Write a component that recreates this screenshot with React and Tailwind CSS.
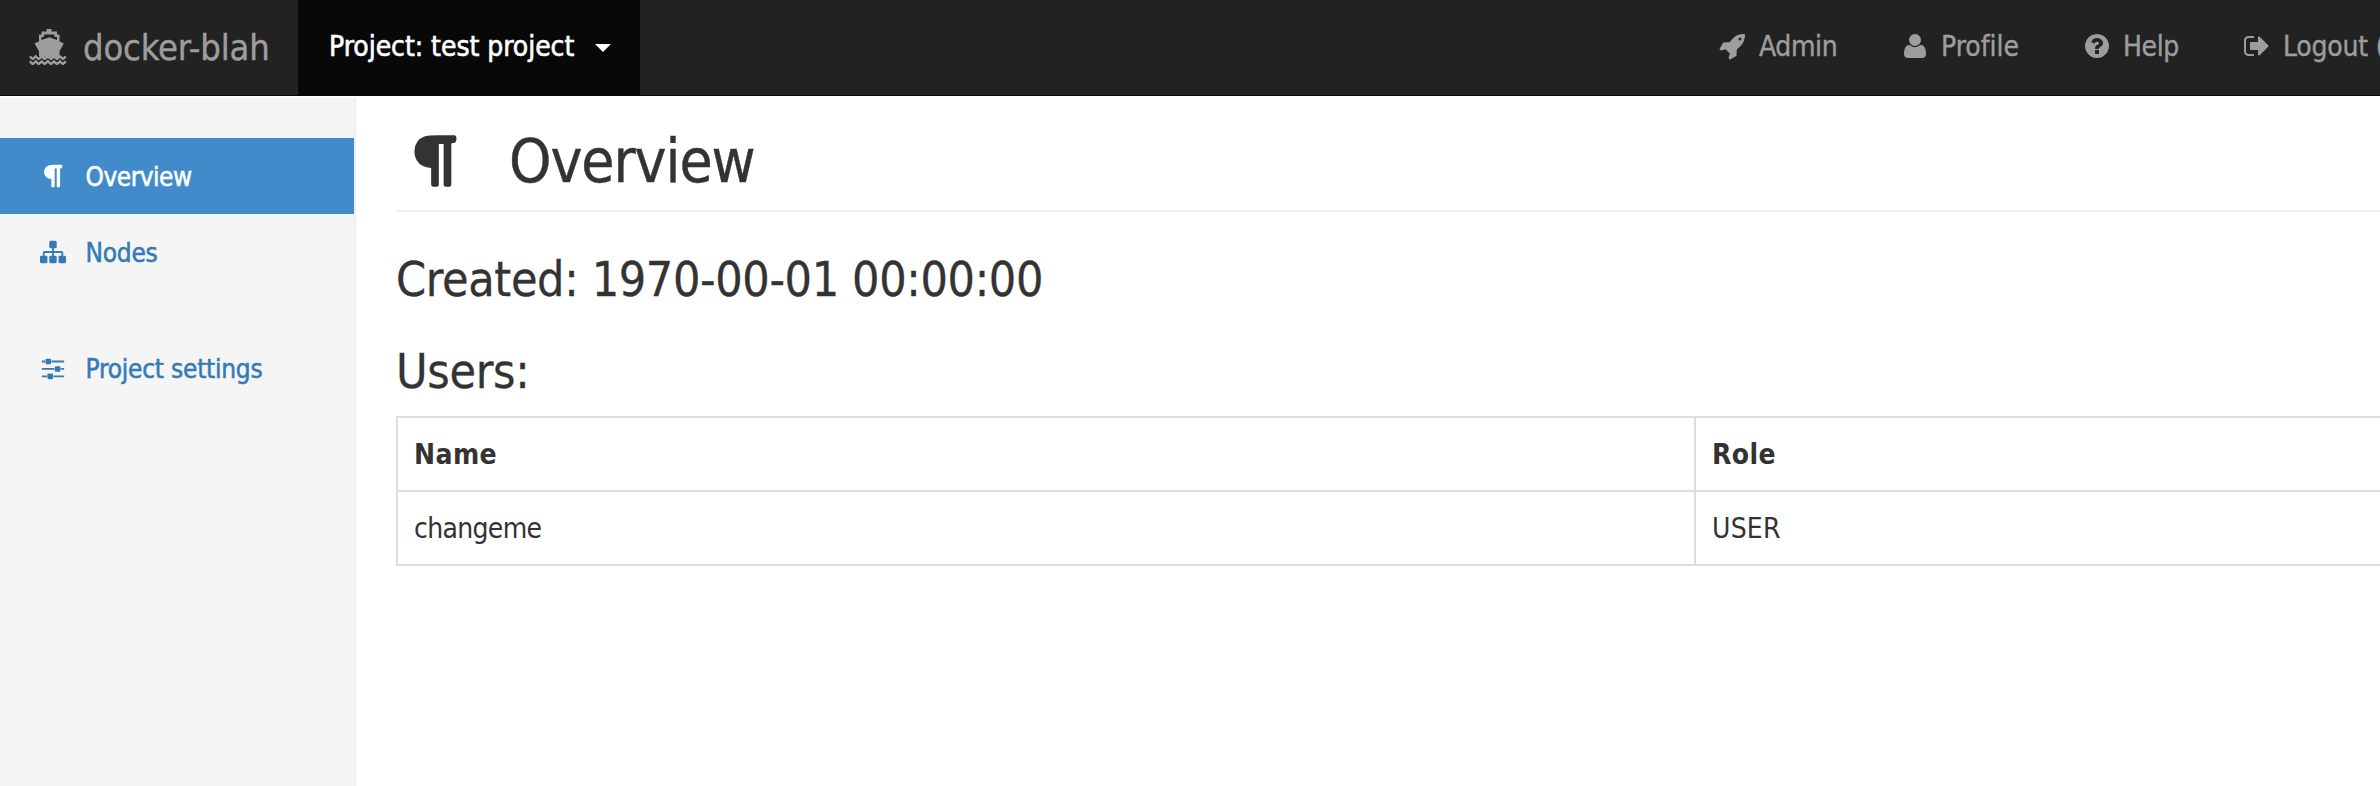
const PATHS = {
  rocket:
    "M1440 448q0-40-28-68t-68-28-68 28-28 68 28 68 68 28 68-28 28-68zm224-288q0 249-75.5 430.5t-253.5 360.5q-81 80-195 176l-20 379q-2 16-16 26l-384 224q-7 4-16 4-12 0-23-9l-64-64q-13-14-8-32l85-276-281-281-276 85q-3 1-9 1-14 0-23-9l-64-64q-17-19-5-39l224-384q10-14 26-16l379-20q96-114 176-195 188-187 358-258t431-71q14 0 24 9.5t10 22.5z",
  user:
    "M1600 1405q0 120-73 189.5t-194 69.5h-874q-121 0-194-69.5t-73-189.5q0-53 3.5-103.5t14-109 26.5-108.5 43-97.5 62-81 85.5-53.5 111.5-20q9 0 42 21.5t74.5 48 108 48 133.5 21.5 133.5-21.5 108-48 74.5-48 42-21.5q61 0 111.5 20t85.500 53.500 62 81 43 97.500 26.500 108.500 14 109 3.500 103.500zm-320-893q0 159-112.500 271.500t-271.500 112.500-271.500-112.500-112.500-271.500 112.500-271.500 271.500-112.500 271.500 112.500 112.500 271.500z",
  help:
    "M1024 1376v-192q0-14-9-23t-23-9h-192q-14 0-23 9t-9 23v192q0 14 9 23t23 9h192q14 0 23-9t9-23zm256-672q0-88-55.5-163t-138.5-116-170-41q-243 0-371 213-15 24 8 42l132 100q7 6 19 6 16 0 25-12 53-68 86-92 34-24 86-24 48 0 85.5 26t37.5 59q0 38-20 61t-68 45q-63 28-115.5 86.5t-52.5 125.5v36q0 14 9 23t23 9h192q14 0 23-9t9-23q0-19 21.5-49.5t54.5-49.5q32-18 49-28.5t46-35 44.5-48 28-60.5 12.5-81zm384 192q0 209-103 385.5t-279.5 279.5-385.5 103-385.5-103-279.5-279.5-103-385.5 103-385.5 279.5-279.5 385.5-103 385.5 103 279.5 279.5 103 385.5z",
  logout:
    "M704 1440q0 4 1 20t.5 26.5-3 23.5-10 19.5-20.5 6.5h-320q-119 0-203.5-84.5t-84.5-203.5v-704q0-119 84.5-203.5t203.5-84.5h320q13 0 22.5 9.5t9.5 22.5q0 4 1 20t.5 26.5-3 23.5-10 19.5-20.5 6.5h-320q-66 0-113 47t-47 113v704q0 66 47 113t113 47h312l11.5 1 11.5 3 8 5.5 7 9 2 13.5zm928-544q0 26-19 45l-544 544q-19 19-45 19t-45-19-19-45v-288h-448q-26 0-45-19t-19-45v-384q0-26 19-45t45-19h448v-288q0-26 19-45t45-19 45 19l544 544q19 19 19 45z",
  paragraph:
    "M1534 189v73q0 29-18.5 61t-42.5 32q-50 0-54 1-26 6-32 31-3 11-3 64v1152q0 25-18 43t-43 18h-108q-25 0-43-18t-18-43v-1218h-143v1218q0 25-17.5 43t-43.5 18h-108q-26 0-43.5-18t-17.5-43v-496q-147-12-245-59-126-58-192-179-64-117-64-259 0-166 88-286 88-118 209-159 111-37 417-37h479q25 0 43 18t18 43z",
  sitemap:
    "M1792 1248v320q0 40-28 68t-68 28h-320q-40 0-68-28t-28-68v-320q0-40 28-68t68-28h96v-192h-512v192h96q40 0 68 28t28 68v320q0 40-28 68t-68 28h-320q-40 0-68-28t-28-68v-320q0-40 28-68t68-28h96v-192h-512v192h96q40 0 68 28t28 68v320q0 40-28 68t-68 28h-320q-40 0-68-28t-28-68v-320q0-40 28-68t68-28h96v-192q0-52 38-90t90-38h512v-192h-96q-40 0-68-28t-28-68v-320q0-40 28-68t68-28h320q40 0 68 28t28 68v320q0 40-28 68t-68 28h-96v192h512q52 0 90 38t38 90v192h96q40 0 68 28t28 68z",
  sliders:
    "M480 1408v128h-352v-128h352zm352-128q26 0 45 19t19 45v256q0 26-19 45t-45 19h-256q-26 0-45-19t-19-45v-256q0-26 19-45t45-19h256zm160-384v128h-864v-128h864zm-640-512v128h-224v-128h224zm1312 1024v128h-736v-128h736zm-960-1152q26 0 45 19t19 45v256q0 26-19 45t-45 19h-256q-26 0-45-19t-19-45v-256q0-26 19-45t45-19h256zm640 512q26 0 45 19t19 45v256q0 26-19 45t-45 19h-256q-26 0-45-19t-19-45v-256q0-26 19-45t45-19h256zm320 128v128h-224v-128h224zm0-512v128h-864v-128h864z",
};

function Icon({ name, className }) {
  return (
    <svg viewBox="0 0 1792 1792" fill="currentColor" className={`shrink-0 ${className}`} aria-hidden="true">
      <path d={PATHS[name]} />
    </svg>
  );
}

function Ship() {
  return (
    <svg viewBox="0 0 40 37" className="h-[37px] w-[40px] shrink-0" aria-hidden="true">
      <path
        fill="currentColor"
        fillRule="evenodd"
        d="M17.5 1h5v2.500h5.500v3h2.500v7l3.600 1.400q.8.4.4 1.200l-4 7.200V29.500l-1.700 1.200-2.500-2.200-2.600 2.200-2.500-2.200-2.500 2.200-2.500-2.200-2.600 2.200-2.500-2.200-1.100-.2v-5.100l-4.200-7.100q-.4-.8.4-1.200L10 13.400v-7h2.500v-3h5zM12.500 8.900v3.200L20.200 9.300l7.800 2.800V8.900h-2.600v-2.400h-10.300v2.400z"
      />
      <path
        fill="none"
        stroke="currentColor"
        strokeWidth="2.4"
        d="M.8 28.300l2.600 2.500h.6l2.700-2.500 2.700 2.500h.6l2.700-2.500 2.600 2.500h.6l2.700-2.500h.4l2.700 2.500h.6l2.600-2.500 2.700 2.500h.6l2.700-2.500 2.700 2.500h.6l2.600-2.500M.8 33.300l2.600 2.500h.6l2.700-2.500 2.700 2.500h.6l2.700-2.500 2.600 2.500h.6l2.700-2.500h.4l2.700 2.500h.6l2.600-2.500 2.700 2.500h.6l2.700-2.500 2.700 2.500h.6l2.600-2.500"
      />
    </svg>
  );
}

function NavLink({ icon, label, className }) {
  return (
    <a href="#" className={`flex shrink-0 gap-3 pt-8 whitespace-nowrap [-webkit-text-stroke:0.4px] ${className}`}>
      <Icon name={icon} className="size-7" />
      <span className="-mt-8 leading-[94px]">{label}</span>
    </a>
  );
}

function SideLink({ icon, label, className }) {
  return (
    <a
      href="#"
      className={`flex h-[76px] items-center pl-[39.5px] text-[26px] [-webkit-text-stroke:0.5px] ${className}`}
    >
      <Icon name={icon} className="size-[26px]" />
      <span className="ml-5 pt-[3px] whitespace-nowrap">{label}</span>
    </a>
  );
}

export default function App() {
  return (
    <div className="flex h-[786px] w-full flex-col overflow-hidden bg-white font-['DejaVu_Sans_Condensed','DejaVu_Sans',sans-serif] text-[28px] text-[#333]">
      <nav className="flex h-24 shrink-0 overflow-hidden border-b border-[#080808] bg-[#222] text-[#9d9d9d]">
        <a href="#" className="flex w-[298px] shrink-0 pl-[29px]">
          <span className="pt-7">
            <Ship />
          </span>
          <span className="ml-[14px] text-[36px] leading-[95px] tracking-[-0.15px] whitespace-nowrap [-webkit-text-stroke:0.4px]">
            docker-blah
          </span>
        </a>
        <button className="flex w-[342px] shrink-0 items-start bg-[#080808] pl-[30px] text-white">
          <span className="w-[266.500px] pl-px text-left leading-[94px] tracking-[-0.05px] whitespace-nowrap [-webkit-text-stroke:0.6px]">
            Project: test project
          </span>
          <svg viewBox="0 0 16 8" className="mt-11 h-2 w-4 shrink-0" fill="currentColor" aria-hidden="true">
            <path d="M0 0h16L8 8z" />
          </svg>
        </button>
        <div className="ml-[1079px] flex shrink-0">
          <NavLink icon="rocket" label="Admin" className="w-[182px] tracking-[-0.4px]" />
          <NavLink icon="user" label="Profile" className="w-[182px] tracking-[-0.04px]" />
          <NavLink icon="help" label="Help" className="w-40 tracking-[-0.4px]" />
          <NavLink icon="logout" label="Logout (" className="tracking-[-0.2px]" />
        </div>
      </nav>

      <div className="flex min-h-0 flex-1 pt-0.5">
        <aside className="w-[356px] shrink-0 border-r-2 border-[#eee] bg-[#f5f5f5] pt-10 text-[#337ab7]">
          <SideLink icon="paragraph" label="Overview" className="bg-[#428bca] tracking-[-0.5px] text-white" />
          <SideLink icon="sitemap" label="Nodes" className="tracking-[-0.26px]" />
          <div className="h-10" />
          <SideLink icon="sliders" label="Project settings" className="tracking-[-0.23px]" />
        </aside>

        <main className="min-w-0 flex-1 overflow-hidden pl-10">
          <h1 className="flex h-[114px] border-b-2 border-[#eee] pt-[30px] pl-[9px] text-[60px] leading-[66px] tracking-[-1.05px] [-webkit-text-stroke:0.4px]">
            <Icon name="paragraph" className="mt-[2.5px] size-[60px]" />
            <span className="ml-11">Overview</span>
          </h1>
          <h2 className="mt-10 text-[48px] leading-[55px] tracking-[-0.38px] whitespace-nowrap [-webkit-text-stroke:0.3px]">
            Created: 1970-00-01 00:00:00
          </h2>
          <h2 className="mt-[37px] text-[48px] leading-[55px] tracking-[-0.35px] [-webkit-text-stroke:0.3px]">Users:</h2>
          <table className="mt-[17px] w-[2598px] table-fixed border-separate border-spacing-0 border-t-2 border-l-2 border-[#ddd] text-left leading-[70px]">
            <thead>
              <tr>
                <th className="w-1/2 border-r-2 border-b-2 border-[#ddd] px-4 pt-0.5 pb-0 font-bold tracking-[0.4px]">
                  Name
                </th>
                <th className="w-1/2 border-r-2 border-b-2 border-[#ddd] px-4 pt-0.5 pb-0 font-bold tracking-[0.4px]">
                  Role
                </th>
              </tr>
            </thead>
            <tbody>
              <tr>
                <td className="border-r-2 border-b-2 border-[#ddd] px-4 pt-0.5 pb-0 tracking-[-0.68px]">changeme</td>
                <td className="border-r-2 border-b-2 border-[#ddd] px-4 pt-0.5 pb-0 tracking-[0.2px]">USER</td>
              </tr>
            </tbody>
          </table>
        </main>
      </div>
    </div>
  );
}
